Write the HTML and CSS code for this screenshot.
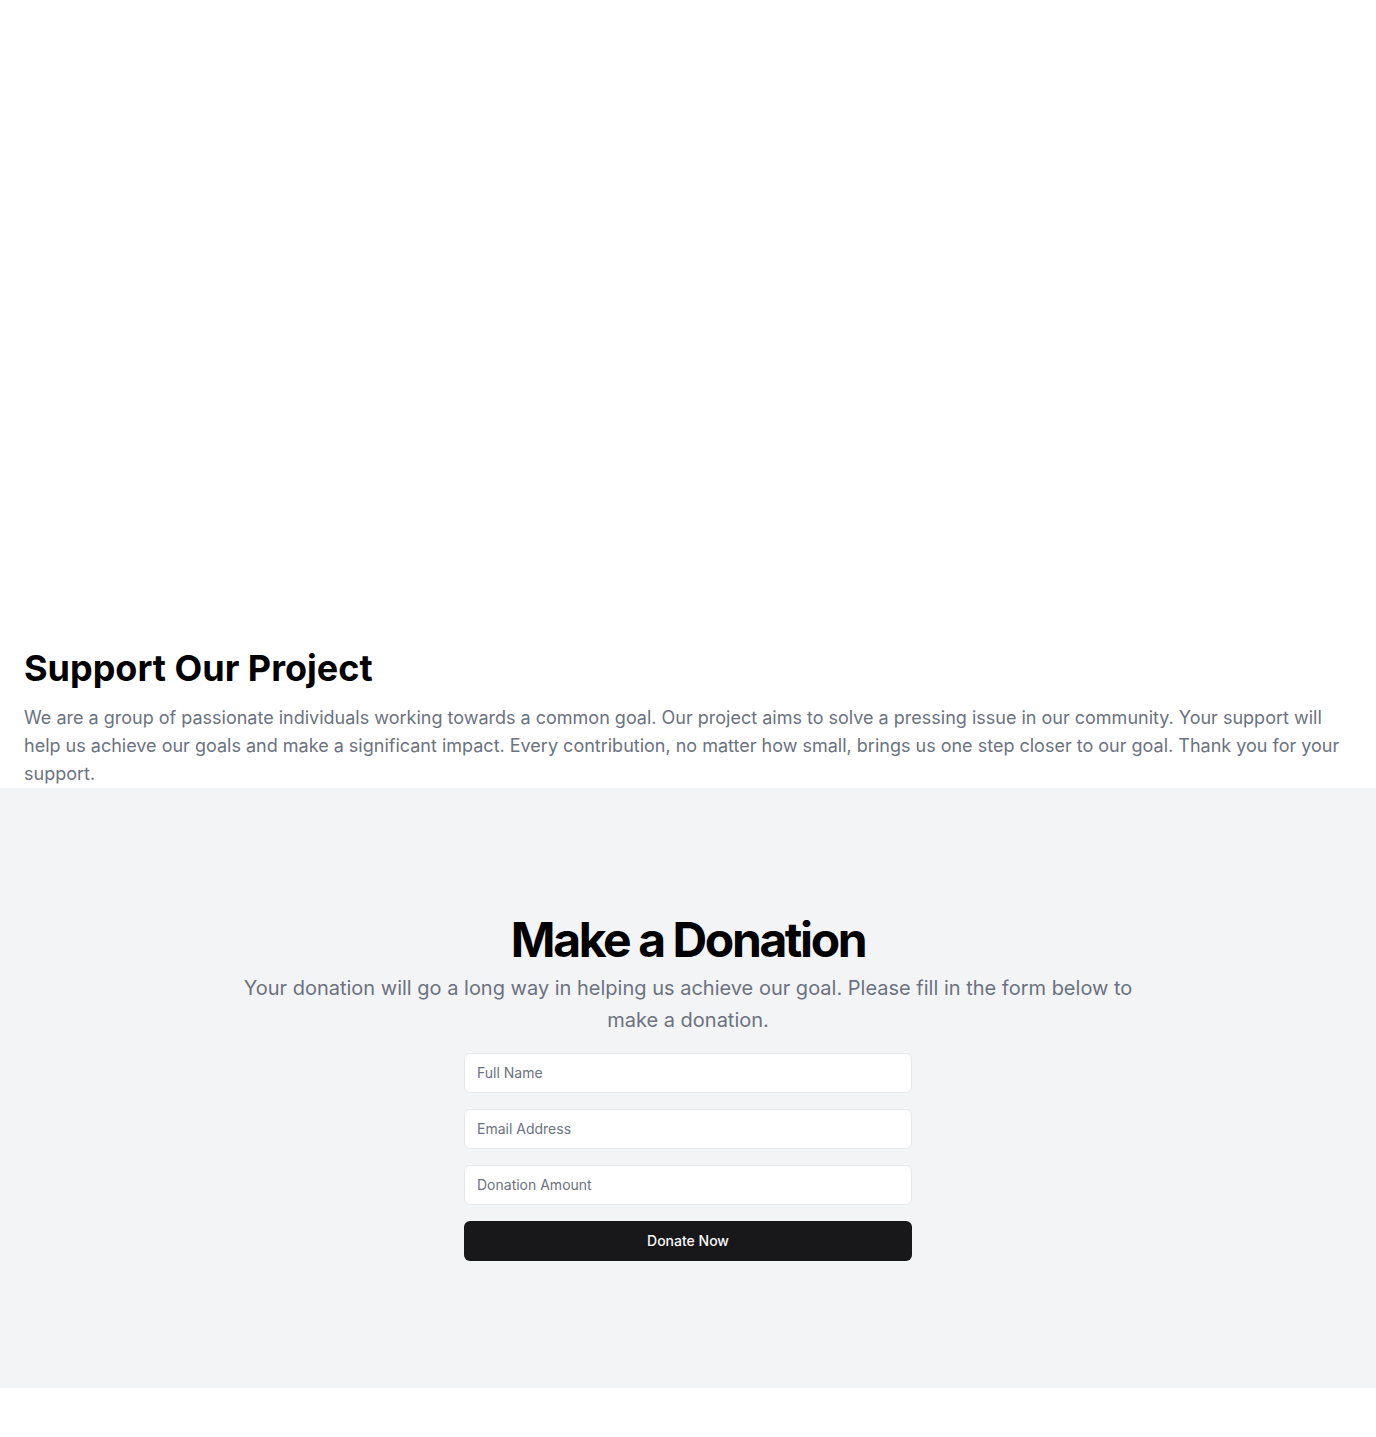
FILE: index.html
```html
<!DOCTYPE html>
<html lang="en">
<head>
<meta charset="utf-8">
<title>Support Our Project</title>
<link rel="stylesheet" href="styles.css">
</head>
<body>
<main class="page">
  <section class="intro">
    <div class="hero-image" aria-hidden="true"></div>
    <div class="intro-text">
      <h1 class="intro-title">Support Our Project</h1>
      <p class="intro-copy">We are a group of passionate individuals working towards a common goal. Our project aims to solve a pressing issue in our community. Your support will help us achieve our goals and make a significant impact. Every contribution, no matter how small, brings us one step closer to our goal. Thank you for your support.</p>
    </div>
  </section>
  <section class="donate">
    <div class="donate-inner">
      <div class="donate-head">
        <h2 class="donate-title">Make a Donation</h2>
        <p class="donate-sub">Your donation will go a long way in helping us achieve our goal. Please fill in the form below to make a donation.</p>
      </div>
      <form class="donate-form">
        <input class="field" type="text" placeholder="Full Name">
        <input class="field" type="email" placeholder="Email Address">
        <input class="field" type="number" placeholder="Donation Amount">
        <button class="submit" type="submit">Donate Now</button>
      </form>
    </div>
  </section>
</main>
</body>
</html>
```
FILE: styles.css
```css
* { box-sizing: border-box; }
html, body { margin: 0; padding: 0; }
body {
  font-family: Inter, "Noto Sans", "Liberation Sans", sans-serif;
  background: #ffffff;
  color: #000;
}
.page { display: flex; flex-direction: column; }
.intro { display: flex; flex-direction: column; gap: 48px; }
.hero-image { height: 600px; background: #ffffff; }
.intro-text { padding: 0 24px; display: flex; flex-direction: column; gap: 16px; }
.intro-title {
  margin: 0;
  font-size: 36px;
  line-height: 40px;
  font-weight: 700;
  color: #000;
}
.intro-copy {
  margin: 0;
  font-size: 18px;
  line-height: 28px;
  color: #6b7280;
}
.donate {
  background: #f3f4f6;
  height: 600px;
  display: flex;
  align-items: center;
  justify-content: center;
  padding: 0 16px;
}
.donate-inner {
  display: flex;
  flex-direction: column;
  align-items: center;
  gap: 16px;
  width: 100%;
}
.donate-head {
  display: flex;
  flex-direction: column;
  align-items: center;
  gap: 8px;
  text-align: center;
}
.donate-title {
  margin: 0;
  font-size: 48px;
  line-height: 48px;
  font-weight: 700;
  letter-spacing: -0.05em;
  color: #000;
}
.donate-sub {
  margin: 0;
  max-width: 900px;
  font-size: 20px;
  line-height: 32.5px;
  color: #6b7280;
}
.donate-form {
  width: 100%;
  max-width: 448px;
  display: flex;
  flex-direction: column;
  gap: 16px;
}
.field {
  height: 40px;
  width: 100%;
  border: 1px solid #e5e7eb;
  border-radius: 6px;
  background: #ffffff;
  padding: 8px 12px;
  font-family: inherit;
  font-size: 14px;
  color: #111827;
  outline: none;
  -moz-appearance: textfield;
}
.field::-webkit-outer-spin-button,
.field::-webkit-inner-spin-button { -webkit-appearance: none; margin: 0; }
.field::placeholder { color: #6b7280; }
.submit {
  height: 40px;
  width: 100%;
  border: none;
  border-radius: 6px;
  background: #18181b;
  color: #fafafa;
  font-family: inherit;
  font-size: 14px;
  font-weight: 500;
  cursor: pointer;
}
```
